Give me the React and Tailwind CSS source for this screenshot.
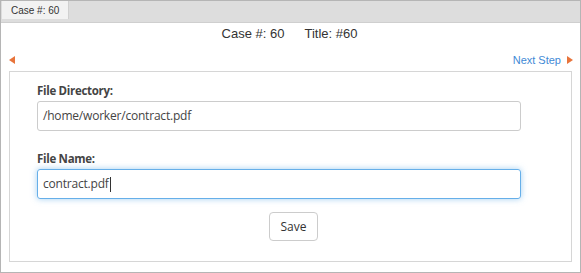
import React from 'react';

const Arrow = ({ dir }) => (
  <svg width="6" height="8" viewBox="0 0 6 8" className="block">
    {dir === 'left' ? (
      <polygon points="6,0 0,4 6,8" fill="#e8743b" />
    ) : (
      <polygon points="0,0 6,4 0,8" fill="#e8743b" />
    )}
  </svg>
);

export default function App() {
  return (
    <div className="w-[581px] h-[273px] border border-[#b5b5b5] bg-white flex flex-col overflow-hidden">
      <div className="h-[22px] bg-[#dddddd] border-b border-[#cfcfcf] flex items-start pl-px">
        <div className="h-[18px] px-[9px] bg-[#f2f2f2] border-r border-[#d0d0d0] flex items-center text-[10px] text-[#333] font-['Liberation_Sans',Arial,sans-serif]">
          Case #: 60
        </div>
      </div>

      <div className="flex justify-center gap-[20px] pr-[2px] pt-[1px] h-[22px] text-[13px] text-[#333] font-['Liberation_Sans',Arial,sans-serif]">
        <span>Case #: 60</span>
        <span>Title: #60</span>
      </div>

      <div className="flex items-center justify-between pl-[8px] pr-[7px] h-[24px] pt-[6px] font-['Liberation_Sans',Arial,sans-serif]">
        <Arrow dir="left" />
        <div className="flex items-center gap-[6px]">
          <span className="text-[11px] text-[#3f8ad6]">Next Step</span>
          <Arrow dir="right" />
        </div>
      </div>

      <div className="mx-[8px] mt-[2px] h-[191px] border border-[#d6d6d6] px-[27px] pt-[11px] font-['Open_Sans',sans-serif]">
        <div className="text-[11.5px] font-bold text-[#444] leading-[16px] tracking-[-0.3px]">File Directory:</div>
        <div className="mt-[2px] w-[484px] h-[30px] border border-[#cccccc] rounded-[3px] flex items-center px-[5px] text-[12px] tracking-[-0.2px] text-[#444]">
          /home/worker/contract.pdf
        </div>

        <div className="mt-[20px] text-[11.5px] font-bold text-[#444] leading-[16px] tracking-[-0.3px]">File Name:</div>
        <div className="mt-[2px] w-[484px] h-[30px] border border-[#66afe9] rounded-[3px] shadow-[0_0_6px_rgba(102,175,233,0.6)] flex items-center px-[5px] text-[12px] tracking-[-0.2px] text-[#444]">
          contract.pdf<span className="w-px h-[15px] bg-[#333] ml-px"></span>
        </div>

        <div className="flex mt-[13px]">
          <button className="ml-[232px] w-[49px] h-[29px] border border-[#cccccc] rounded-[4px] bg-white text-[12px] text-[#333]">
            Save
          </button>
        </div>
      </div>
    </div>
  );
}
